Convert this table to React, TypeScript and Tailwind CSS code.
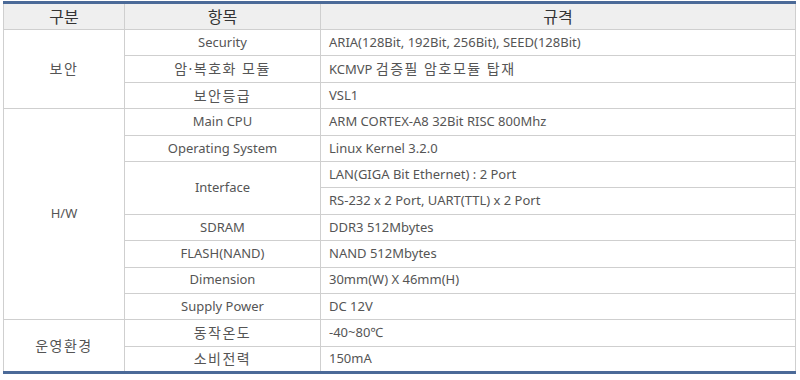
import React from "react";

const font = { fontFamily: '"Noto Sans", "Noto Sans CJK KR", sans-serif' };

const K = ({ children }: { children: React.ReactNode }) => (
  <span className="text-[14px] tracking-[1.5px]">{children}</span>
);

type Row = { group?: React.ReactNode; groupSpan?: number; item?: React.ReactNode; itemSpan?: number; spec: React.ReactNode };

const rows: Row[] = [
  { group: <K>보안</K>, groupSpan: 3, item: "Security", spec: "ARIA(128Bit, 192Bit, 256Bit), SEED(128Bit)" },
  { item: <K>암·복호화 모듈</K>, spec: <>KCMVP <K>검증필 암호모듈 탑재</K></> },
  { item: <K>보안등급</K>, spec: "VSL1" },
  { group: "H/W", groupSpan: 8, item: "Main CPU", spec: "ARM CORTEX-A8 32Bit RISC 800Mhz" },
  { item: "Operating System", spec: "Linux Kernel 3.2.0" },
  { item: "Interface", itemSpan: 2, spec: "LAN(GIGA Bit Ethernet) : 2 Port" },
  { spec: "RS-232 x 2 Port, UART(TTL) x 2 Port" },
  { item: "SDRAM", spec: "DDR3 512Mbytes" },
  { item: "FLASH(NAND)", spec: "NAND 512Mbytes" },
  { item: "Dimension", spec: "30mm(W) X 46mm(H)" },
  { item: "Supply Power", spec: "DC 12V" },
  { group: <K>운영환경</K>, groupSpan: 2, item: <K>동작온도</K>, spec: "-40~80℃" },
  { item: <K>소비전력</K>, spec: "150mA" },
];

export default function App() {
  return (
    <div className="w-[800px] h-[380px] bg-white pt-[1px] pl-[3px]" style={font}>
      <table className="w-[793px] border-collapse table-fixed border-t-[3px] border-b-[3px] border-t-[#4b6a98] border-b-[#4b6a98] text-[13px] text-[#555]">
        <colgroup>
          <col className="w-[121px]" />
          <col className="w-[196px]" />
          <col />
        </colgroup>
        <thead>
          <tr className="h-[27px] bg-[#efefef]">
            <th className="border border-[#cfcfcf] border-t-[#4b6a98] border-t-[3px] font-normal text-[16px] text-[#333] p-0">구분</th>
            <th className="border border-[#cfcfcf] border-t-[#4b6a98] border-t-[3px] font-normal text-[16px] text-[#333] p-0">항목</th>
            <th className="border border-[#cfcfcf] border-t-[#4b6a98] border-t-[3px] font-normal text-[16px] text-[#333] p-0">규격</th>
          </tr>
        </thead>
        <tbody>
          {rows.map((r, i) => (
            <tr key={i} className="h-[26.4px]">
              {r.group && (
                <td rowSpan={r.groupSpan} className="border border-[#cfcfcf] text-center p-0">
                  {r.group}
                </td>
              )}
              {r.item && (
                <td rowSpan={r.itemSpan ?? 1} className="border border-[#cfcfcf] text-center p-0">
                  {r.item}
                </td>
              )}
              <td className="border border-[#cfcfcf] pl-[8px] p-0">{r.spec}</td>
            </tr>
          ))}
        </tbody>
      </table>
    </div>
  );
}
